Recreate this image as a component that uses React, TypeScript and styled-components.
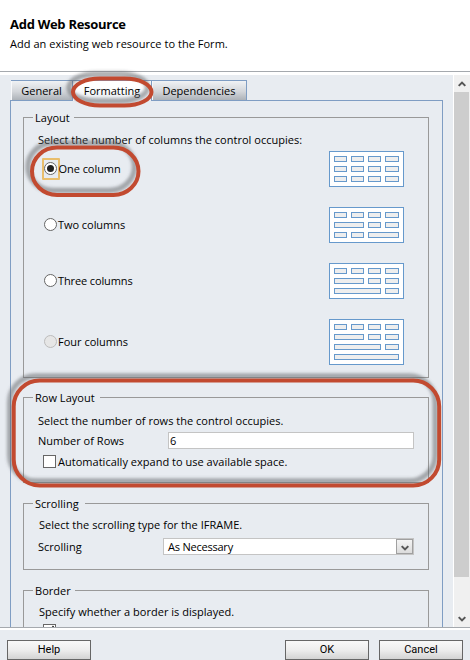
import React from "react";
import styled, { createGlobalStyle } from "styled-components";

const GlobalStyle = createGlobalStyle`
  * { box-sizing: border-box; }
  html, body { margin: 0; padding: 0; background: #fff; }
  body { overflow: hidden; }
`;

const Dialog = styled.div`
  position: relative;
  display: flex;
  flex-direction: column;
  width: 470px;
  height: 660px;
  overflow: hidden;
  background: #fff;
  color: #000;
  font: 11px/14px "Open Sans", "Noto Sans", sans-serif;
`;

const Text = styled.span<{ $track?: number }>`
  display: block;
  white-space: nowrap;
  letter-spacing: ${(p) => p.$track ?? 0.02}px;
`;

const Header = styled.header`
  height: 72px;
  padding: 16px 10px 0;
  border-bottom: 1px solid #a5a9ae;
`;

const Title = styled.h1`
  margin: 0 0 5px;
  font-size: 13px;
  line-height: 16px;
  font-weight: 700;
  white-space: nowrap;
  letter-spacing: -0.28px;
`;

const Body = styled.main`
  display: flex;
  height: 552px;
  margin-top: 3px;
  overflow: hidden;
`;

const Content = styled.div`
  width: 454px;
  height: 552px;
  padding: 5px 10px 0;
  overflow: hidden;
  background: #e8ecf1;
  border-right: 1px solid #fff;
`;

const TabBar = styled.div`
  display: flex;
  height: 20px;
  padding-left: 1px;
`;

const Tab = styled.div<{ $width: number; $active?: boolean }>`
  display: flex;
  justify-content: center;
  width: ${(p) => p.$width}px;
  height: ${(p) => (p.$active ? 21 : 20)}px;
  padding-top: 3px;
  position: relative;
  z-index: 1;
  border: 1px solid #7f9dc3;
  border-width: 1px 1px 0 0;
  box-shadow: inset 1px 0 #f8f9fb;
  background: ${(p) =>
    p.$active ? "linear-gradient(#fff 30%, #e8ecf1)" : "linear-gradient(#f0f2f4, #d3d6da 55%, #adb2b8)"};
`;

const Panel = styled.div`
  width: 433px;
  height: 540px;
  padding: 9px 13px 0 12px;
  border: 1px solid #7f9dc3;
`;

const Group = styled.fieldset<{ $before: number; $after: number }>`
  display: block;
  min-width: 0;
  width: 406px;
  margin: ${(p) => p.$before}px 0 0;
  padding: 0 14px ${(p) => p.$after}px;
  border: 1px solid #999;
`;

const Legend = styled.legend<{ $width: number }>`
  width: ${(p) => p.$width}px;
  height: 14px;
  margin-left: -5px;
  padding: 1px 0 0 2px;
`;

const Description = styled(Text)<{ $top: number; $bottom: number; $indent?: number }>`
  margin: ${(p) => p.$top}px 0 ${(p) => p.$bottom}px ${(p) => p.$indent ?? 0}px;
`;

const Options = styled.div`
  display: flex;
  flex-direction: column;
  gap: 20px;
  padding-right: 10px;
`;

const Option = styled.div`
  display: flex;
  align-items: center;
  justify-content: space-between;
`;

const Choice = styled.div`
  display: flex;
  align-items: center;
  height: 22px;
  padding-left: 4px;
`;

const RadioFrame = styled.span<{ $focus?: boolean }>`
  display: flex;
  align-items: flex-start;
  width: 18px;
  height: 22px;
  margin-right: ${(p) => (p.$focus ? -1.5 : -2)}px;
  padding-top: 2px;
  border: 2px solid ${(p) => (p.$focus ? "#e9be6c" : "transparent")};
  border-radius: 1px;
`;

const Radio = styled.span<{ $disabled?: boolean }>`
  display: flex;
  flex: none;
  align-items: center;
  justify-content: center;
  width: 13px;
  height: 13px;
  border: 1px solid ${(p) => (p.$disabled ? "#bcbcbc" : "#666")};
  border-radius: 50%;
  background: ${(p) => (p.$disabled ? "#e6e6e6" : "#fff")};
`;

const Dot = styled.span`
  width: 7px;
  height: 7px;
  border-radius: 50%;
  background: #212121;
`;

const Checkbox = styled.span`
  display: block;
  flex: none;
  width: 13px;
  height: 13px;
  margin: 0 2px 0 1px;
  border: 1px solid #666;
  background: #fff;
`;

const CheckLine = styled.div<{ $before: number }>`
  display: flex;
  align-items: flex-start;
  height: 14px;
  margin-top: ${(p) => p.$before}px;
  padding-left: 4px;
`;

const Field = styled.div`
  display: flex;
  align-items: center;
  justify-content: space-between;
  height: 17px;
`;

const Input = styled.div<{ $width: number }>`
  display: flex;
  align-items: center;
  width: ${(p) => p.$width}px;
  height: 17px;
  padding-left: 1px;
  border: 1px solid #c4c4c4;
  background: #fff;
`;

const Select = styled(Input)`
  justify-content: space-between;
  padding-left: 4px;
`;

const SelectArrow = styled.span`
  display: flex;
  align-items: center;
  justify-content: center;
  width: 17px;
  height: 15px;
  padding-top: 3px;
  border: 1px solid #a0a0a0;
  background: linear-gradient(#f4f4f4, #dcdcdc);
`;

const ScrollBar = styled.div`
  display: flex;
  flex-direction: column;
  width: 16px;
  background: #f0f0f0;
`;

const ScrollButton = styled.div`
  display: flex;
  align-items: center;
  justify-content: center;
  height: 17px;
`;

const ScrollTrack = styled.div`
  flex: 1;
`;

const Thumb = styled.div`
  width: 15px;
  height: 485px;
  background: #cdcdcd;
`;

const Footer = styled.footer`
  display: flex;
  align-items: flex-start;
  height: 33px;
  padding: 12px 7px 0;
  border-top: 1px solid #a5a9ae;
  background: linear-gradient(#fff 2px, #e8ecf1 2px);
`;

const Button = styled.div<{ $after?: string }>`
  display: flex;
  align-items: center;
  justify-content: center;
  width: 84px;
  height: 20px;
  margin-right: ${(p) => p.$after ?? "0"};
  border: 1px solid #666;
  background: linear-gradient(#f8f8f8, #ededed 50%, #d3d3d3);
  font-family: Roboto, sans-serif;
`;

const Overlay = styled.svg`
  position: absolute;
  inset: 0;
  z-index: 2;
  pointer-events: none;
`;

const SLOT_X = [5, 22, 39, 56];
const SLOT_END = [18, 35, 52, 70];

function ColumnDiagram({ rows }: { rows: number[][] }) {
  const height = rows.length * 10 + 6;
  return (
    <svg width="75" height={height} shapeRendering="crispEdges" stroke="#6699cc">
      <rect x=".5" y=".5" width="74" height={height - 1} fill="#fff" />
      {rows.map((spans, r) => {
        let slot = 0;
        return spans.map((span) => {
          const x = SLOT_X[slot];
          const end = SLOT_END[slot + span - 1];
          slot += span;
          return (
            <rect key={`${r}-${x}`} x={x + 0.5} y={r * 10 + 5.5} width={end - x - 1} height="5" fill="#eee" />
          );
        });
      })}
    </svg>
  );
}

function Chevron({ up }: { up?: boolean }) {
  return (
    <svg width="8" height="6" viewBox="0 0 8 6" fill="none" stroke="#555" strokeWidth="2">
      <path d={up ? "M.7 4.9 4 1.6l3.3 3.3" : "M.7 1.1 4 4.4l3.3-3.3"} />
    </svg>
  );
}

const OPTIONS = [
  { label: "One column", track: -0.05, checked: true, rows: [[1, 1, 1, 1], [1, 1, 1, 1], [1, 1, 1, 1]] },
  { label: "Two columns", track: -0.05, rows: [[1, 1, 1, 1], [2, 1, 1], [1, 1, 2]] },
  { label: "Three columns", track: -0.12, rows: [[1, 1, 1, 1], [2, 1, 1], [3, 1]] },
  { label: "Four columns", track: 0, disabled: true, rows: [[1, 1, 1, 1], [2, 1, 1], [3, 1], [4]] },
];

const HIGHLIGHTS = [
  { x: 73, y: 78.5, width: 78.5, height: 27, rx: 27, ry: 13.5 },
  { x: 32, y: 147.5, width: 106.5, height: 47.5, rx: 25, ry: 23.7 },
  { x: 13.7, y: 380.5, width: 425.5, height: 105, rx: 26, ry: 26 },
];

export default function App() {
  return (
    <Dialog>
      <GlobalStyle />
      <Header>
        <Title>Add Web Resource</Title>
        <Text $track={0.03}>Add an existing web resource to the Form.</Text>
      </Header>
      <Body>
        <Content>
          <TabBar>
            <Tab $width={62}><Text>General</Text></Tab>
            <Tab $width={79} $active><Text>Formatting</Text></Tab>
            <Tab $width={95}><Text>Dependencies</Text></Tab>
          </TabBar>
          <Panel>
            <Group $before={0} $after={12}>
              <Legend $width={41}><Text>Layout</Text></Legend>
              <Description $top={9} $bottom={4}>
                Select the number of columns the control occupies:
              </Description>
              <Options>
                {OPTIONS.map((o) => (
                  <Option key={o.label}>
                    <Choice>
                      <RadioFrame $focus={o.checked}>
                        <Radio $disabled={o.disabled}>{o.checked && <Dot />}</Radio>
                      </RadioFrame>
                      <Text $track={o.track}>{o.label}</Text>
                    </Choice>
                    <ColumnDiagram rows={o.rows} />
                  </Option>
                ))}
              </Options>
            </Group>
            <Group $before={12} $after={13}>
              <Legend $width={67}><Text>Row Layout</Text></Legend>
              <Description $top={10} $bottom={4}>
                Select the number of rows the control occupies.
              </Description>
              <Field>
                <Text>Number of Rows</Text>
                <Input $width={246}><Text>6</Text></Input>
              </Field>
              <CheckLine $before={6}>
                <Checkbox />
                <Text>Automatically expand to use available space.</Text>
              </CheckLine>
            </Group>
            <Group $before={13} $after={14}>
              <Legend $width={52}><Text>Scrolling</Text></Legend>
              <Description $top={8} $bottom={6} $indent={1}>
                Select the scrolling type for the IFRAME.
              </Description>
              <Field>
                <Text>Scrolling</Text>
                <Select $width={251}>
                  <Text $track={-0.22}>As Necessary</Text>
                  <SelectArrow><Chevron /></SelectArrow>
                </Select>
              </Field>
            </Group>
            <Group $before={13} $after={14}>
              <Legend $width={42}><Text>Border</Text></Legend>
              <Description $top={8} $bottom={5} $indent={1}>
                Specify whether a border is displayed.
              </Description>
              <CheckLine $before={0}>
                <Checkbox>
                  <svg width="11" height="11" viewBox="0 0 11 11" fill="none" stroke="#222" strokeWidth="1.5">
                    <path d="M2 5.5 4.5 8 9.5 1" />
                  </svg>
                </Checkbox>
              </CheckLine>
            </Group>
          </Panel>
        </Content>
        <ScrollBar>
          <ScrollButton><Chevron up /></ScrollButton>
          <ScrollTrack><Thumb /></ScrollTrack>
          <ScrollButton><Chevron /></ScrollButton>
        </ScrollBar>
      </Body>
      <Footer>
        <Button $after="auto"><Text>Help</Text></Button>
        <Button $after="10px"><Text>OK</Text></Button>
        <Button><Text>Cancel</Text></Button>
      </Footer>
      <Overlay width="470" height="660" fill="none">
        <defs>
          <filter id="soften" filterUnits="userSpaceOnUse" x="0" y="0" width="470" height="660">
            <feGaussianBlur stdDeviation="1.8" />
          </filter>
        </defs>
        {HIGHLIGHTS.map((h) => (
          <g key={h.y}>
            <rect {...h} transform="translate(-4 -4.5)" stroke="#5c6063" strokeOpacity=".5" strokeWidth="5.5" filter="url(#soften)" />
            <rect {...h} stroke="#c24a30" strokeWidth="4" />
          </g>
        ))}
      </Overlay>
    </Dialog>
  );
}
